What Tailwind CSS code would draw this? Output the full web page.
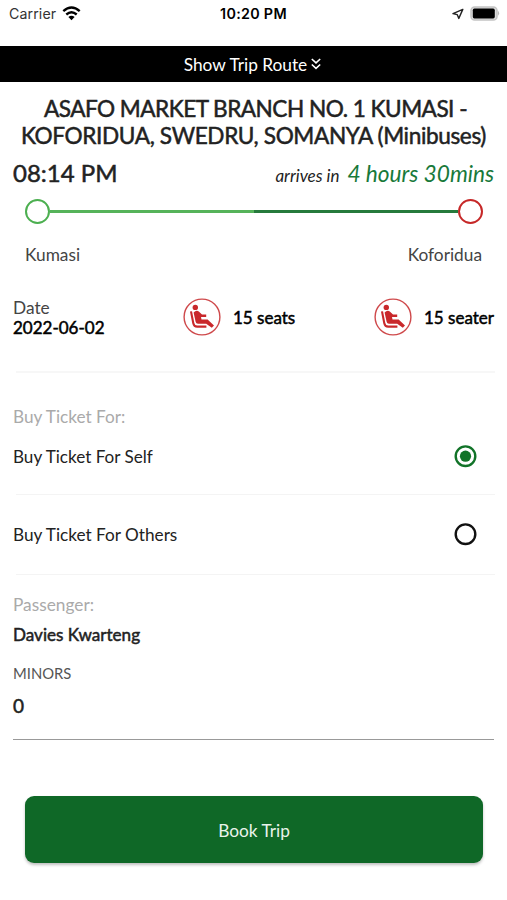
<!DOCTYPE html>
<html lang="en">
<head>
<meta charset="utf-8">
<title>Book Trip</title>
<script src="https://cdn.jsdelivr.net/npm/@tailwindcss/browser@4"></script>
</head>
<body class="bg-white">
<svg class="hidden">
  <symbol id="seat" viewBox="0 0 38 38">
    <circle cx="19" cy="19" r="17.9" fill="#fff" stroke="#cf4a4c" stroke-width="1.4"/>
    <g fill="none" stroke="#c9282b" stroke-linejoin="round">
      <circle cx="12.3" cy="9.4" r="2.7" fill="#c9282b" stroke="none"/>
      <path d="M8 13.4 L10.3 25.2 Q11 28.6 14.2 28.6 H23.4" stroke-width="2.1"/>
      <path d="M10.6 14.4 Q13.2 11.8 15.8 13.4 L19 16.6 H23.2 V19 H18 L18.5 21.6 H24.6 L31 27.4 L28.8 29.8 L23.2 25.8 H15 Q13 25.6 12.6 23.8Z" fill="#c9282b" stroke="none"/>
    </g>
  </symbol>
</svg>
<main class="w-[507px] h-[900px] overflow-hidden font-['Lato',sans-serif] text-[#222] whitespace-nowrap">
  <header class="h-[46px] grid grid-cols-3 items-start text-black font-['Inter',sans-serif]">
    <div class="flex items-center h-[28px] pl-[9px]">
      <span class="text-[14.2px] tracking-[0.1px] text-[#333]">Carrier</span>
      <svg class="ml-[6px] -mt-[2px]" width="19" height="15" viewBox="0 0 19 15"><g fill="none" stroke="#000" stroke-width="2.4"><path d="M1.3 5.2 Q9.5 -2 17.7 5.2"/><path d="M4.3 8.5 Q9.5 4 14.7 8.5"/></g><path d="M6.4 11 Q9.5 8.3 12.6 11 L9.5 14.2Z"/></svg>
    </div>
    <div class="h-[28px] leading-[28px] text-center text-[14.3px] tracking-[0.3px] font-semibold">10:20 PM</div>
    <div class="flex items-center justify-end h-[27px] pr-[7px]">
      <svg class="mr-[6px]" width="12" height="12" viewBox="0 0 12 12"><path d="M10.8 1.4 L1 5.6 L5.2 6.6 L6.8 10.4Z" fill="none" stroke="#222" stroke-width="1.4" stroke-linejoin="round"/></svg>
      <svg width="30" height="15" viewBox="0 0 30 15"><rect x="1" y="1" width="26" height="13" rx="3.6" fill="#ddd" stroke="#c4c4c4" stroke-width="1.5"/><rect x="2.8" y="2.6" width="22" height="9.8" rx="1.6" fill="#000"/><path d="M28 4.8 Q30.2 7.3 28 9.8Z" fill="#bbb"/></svg>
    </div>
  </header>
  <button class="w-full h-[36px] pr-[2px] bg-black text-white text-[17.3px] flex items-center justify-center">
    <span class="pt-[2px]">Show Trip Route</span>
    <svg class="ml-[4px]" width="10" height="12" viewBox="0 0 10 12" fill="none" stroke="#fff" stroke-width="1.6"><path d="M.8 1 L5 4.8 L9.2 1M.8 6.5 L5 10.3 L9.2 6.5"/></svg>
  </button>
  <h1 class="mt-[13px] text-center text-[22.6px] leading-[27px] [-webkit-text-stroke:0.5px_#222]"><span class="pl-[4px] tracking-[-0.52px]">ASAFO MARKET BRANCH NO. 1 KUMASI -</span><br><span class="tracking-[-0.37px]">KOFORIDUA, SWEDRU, SOMANYA (Minibuses)</span></h1>
  <div class="mt-[7px] h-[35px] px-[13px] flex items-baseline justify-between leading-[34px]">
    <span class="text-[24px] [-webkit-text-stroke:0.5px_#222]">08:14 PM</span>
    <span class="italic"><span class="text-[17px]">arrives in</span><span class="ml-[8px] text-[22.7px] tracking-[-0.02px] text-[#18793a]">4 hours 30mins</span></span>
  </div>
  <div class="mt-[8px] h-[25px] pl-[25px] pr-[24px] flex items-center">
    <i class="size-[25px] rounded-full border-[2.5px] border-[#4caf50]"></i>
    <i class="flex-1 h-[3px] bg-[#56b35a]"></i>
    <i class="flex-1 h-[3px] bg-[#267a3c]"></i>
    <i class="size-[25px] rounded-full border-[2.5px] border-[#c62828]"></i>
  </div>
  <div class="mt-[21px] h-[20px] leading-[20px] px-[25px] flex justify-between text-[17.3px] text-[#444]"><span>Kumasi</span><span>Koforidua</span></div>
  <section class="mt-[33px] h-[38px] px-[13px] flex items-center">
    <div class="w-[170px] pt-[2px] text-[17.3px] leading-[20.5px]"><div class="text-[#444]">Date</div><div class="text-[17px] text-black [-webkit-text-stroke:0.5px_#000]">2022-06-02</div></div>
    <svg class="size-[38px]"><use href="#seat"/></svg>
    <span class="ml-[12px] w-[141px] pt-[2px] text-[17px] text-black [-webkit-text-stroke:0.5px_#000]">15 seats</span>
    <svg class="size-[38px]"><use href="#seat"/></svg>
    <span class="ml-[12px] pt-[2px] text-[17px] text-black [-webkit-text-stroke:0.5px_#000]">15 seater</span>
  </section>
  <hr class="mt-[35px] ml-[16px] mr-[12px] border-t-2 border-[#f7f7f7]">
  <h2 class="mt-[34px] h-[20px] leading-[20px] pl-[13px] text-[17.2px] text-[#aaa]">Buy Ticket For:</h2>
  <label class="mt-[18px] h-[22px] pl-[13px] pr-[30px] flex items-center justify-between text-[17.1px] text-[#222]"><span class="pt-[2px]">Buy Ticket For Self</span><svg width="23" height="23" viewBox="0 0 23 23"><circle cx="11.5" cy="11.2" r="9.8" fill="none" stroke="#117328" stroke-width="2.4"/><circle cx="11.5" cy="11.2" r="5.6" fill="#117328"/></svg></label>
  <hr class="mt-[27px] ml-[16px] mr-[12px] border-[#f4f4f4]">
  <label class="mt-[28px] h-[22px] pl-[13px] pr-[30px] flex items-center justify-between text-[17.2px] text-[#222]"><span class="pt-[2px]">Buy Ticket For Others</span><svg width="23" height="23" viewBox="0 0 23 23"><circle cx="11.5" cy="11.2" r="9.8" fill="none" stroke="#111" stroke-width="2.4"/></svg></label>
  <hr class="mt-[29px] ml-[16px] mr-[12px] border-[#f4f4f4]">
  <section class="px-[13px]">
    <h2 class="mt-[20px] h-[20px] leading-[20px] text-[17.3px] text-[#aaa]">Passenger:</h2>
    <div class="mt-[10px] h-[20px] leading-[20px] text-[17.1px] [-webkit-text-stroke:0.5px_#222]">Davies Kwarteng</div>
    <div class="mt-[18px] h-[20px] leading-[20px] text-[14.8px] text-[#555]">MINORS</div>
    <div class="mt-[13px] h-[44px] leading-[20px] text-[19px] border-b border-[#999] [-webkit-text-stroke:0.5px_#222]">0</div>
  </section>
  <button class="mt-[56px] ml-[25px] w-[458px] h-[67px] pt-[2px] rounded-[9px] bg-[#0f6827] text-[#e9f3eb] text-[17.3px] shadow-[0_2px_3px_rgba(0,0,0,0.25)]">Book Trip</button>
</main>
</body>
</html>
